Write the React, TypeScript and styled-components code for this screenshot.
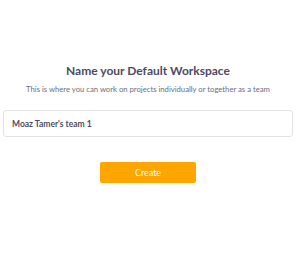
import React, { useState } from 'react';
import styled, { createGlobalStyle } from 'styled-components';

const GlobalStyle = createGlobalStyle`
  html, body {
    margin: 0;
    padding: 0;
    background: #ffffff;
  }
  body {
    font-family: Lato, "Open Sans", sans-serif;
  }
`;

export default function App() {
  const [name, setName] = useState("Moaz Tamer's team 1");

  return (
    <Page>
      <GlobalStyle />
      <Panel>
        <Title>Name your Default Workspace</Title>
        <Subtitle>This is where you can work on projects individually or together as a team</Subtitle>
        <NameInput value={name} onChange={(e) => setName(e.target.value)} />
        <CreateButton type="button">Create</CreateButton>
      </Panel>
    </Page>
  );
}

const Page = styled.div`
  width: 300px;
  height: 259px;
  box-sizing: border-box;
  padding: 63px 7px 0 3px;
`;

const Panel = styled.div`
  display: flex;
  flex-direction: column;
  align-items: center;
`;

const Title = styled.h1`
  margin: 0;
  font-size: 12px;
  line-height: 16px;
  font-weight: 700;
  color: #4b4b66;
`;

const Subtitle = styled.p`
  margin: 5px 0 0;
  font-size: 7.7px;
  line-height: 10px;
  color: #6d6d80;
`;

const NameInput = styled.input`
  margin-top: 16px;
  width: 100%;
  height: 27px;
  box-sizing: border-box;
  padding: 0 8px;
  border: 1px solid #e2e2e6;
  border-radius: 3px;
  font-family: Lato, sans-serif;
  font-size: 8.5px;
  font-weight: 700;
  color: #4f4f62;
  outline: none;
`;

const CreateButton = styled.button`
  margin-top: 25px;
  width: 96px;
  height: 21px;
  border: none;
  border-radius: 2px;
  background: #ffa500;
  color: #ffffff;
  font-family: Lato, sans-serif;
  font-size: 9px;
  cursor: pointer;
`;
